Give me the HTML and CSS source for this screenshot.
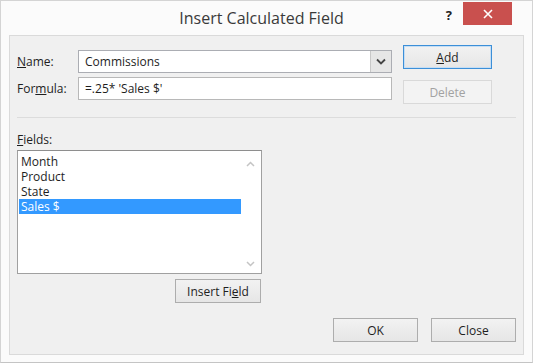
FILE: index.html
```html
<!DOCTYPE html>
<html lang="en">
<head>
  <meta charset="UTF-8" />
  <title>Insert Calculated Field</title>
  <link rel="stylesheet" href="styles.css">
</head>
<body>

  <div class="janela">
    <!-- Barra de título -->
    <div class="titulo-barra">
      <div></div>
      <div class="titulo">Insert Calculated Field</div>
      <div class="controles">
        <span class="ajuda">?</span>
        <span class="fechar">
          <svg width="10" height="10" viewBox="0 0 10 10"><path d="M1 1L9 9M9 1L1 9" stroke="#fff" stroke-width="1.6"/></svg>
        </span>
      </div>
    </div>

    <div class="painel">
      <div class="topo">
        <div class="campos">
          <div class="linha">
            <label class="rotulo"><u>N</u>ame:</label>
            <div class="combo">
              <span class="valor">Commissions</span>
              <span class="seta">
                <svg width="10" height="7" viewBox="0 0 10 7"><path d="M1 1.5L5 5.5L9 1.5" fill="none" stroke="#444" stroke-width="1.8"/></svg>
              </span>
            </div>
          </div>
          <div class="linha">
            <label class="rotulo">For<u>m</u>ula:</label>
            <div class="entrada">=.25* 'Sales $'</div>
          </div>
        </div>
        <div class="acoes">
          <button class="botao foco"><u>A</u>dd</button>
          <button class="botao inativo">Delete</button>
        </div>
      </div>

      <div class="separador"></div>

      <div class="lista-area">
        <div class="rotulo"><u>F</u>ields:</div>
        <div class="lista">
          <div class="itens">
            <div class="item">Month</div>
            <div class="item">Product</div>
            <div class="item">State</div>
            <div class="item selecionado">Sales $</div>
          </div>
          <div class="rolagem">
            <svg width="9" height="6" viewBox="0 0 9 6"><path d="M1 5L4.5 1.5L8 5" fill="none" stroke="#c4c4c4" stroke-width="1.5"/></svg>
            <svg width="9" height="6" viewBox="0 0 9 6"><path d="M1 1L4.5 4.5L8 1" fill="none" stroke="#c4c4c4" stroke-width="1.5"/></svg>
          </div>
        </div>
        <button class="botao inserir">Insert Fi<u>e</u>ld</button>
      </div>

      <div class="rodape">
        <button class="botao">OK</button>
        <button class="botao">Close</button>
      </div>
    </div>
  </div>

</body>
</html>
```

FILE: styles.css
```css
body {
  margin: 0;
  font-family: "Open Sans", "Noto Sans", sans-serif;
  font-size: 12px;
  color: #1e1e1e;
  background: #fff;
}

.janela {
  width: 533px;
  height: 363px;
  box-sizing: border-box;
  background: #fbfbfb;
  border: 1px solid #d4d4d4;
  border-bottom-color: #c4c4c4;
  padding: 0 8px 7px 8px;
  display: flex;
  flex-direction: column;
}

.titulo-barra {
  height: 34px;
  display: grid;
  grid-template-columns: 1fr auto 1fr;
  align-items: start;
}

.titulo {
  font-size: 16px;
  color: #3a3a3a;
  padding-top: 6px;
  padding-right: 10px;
}

.controles {
  display: flex;
  justify-content: flex-end;
  align-items: flex-start;
  margin-right: 12px;
}

.ajuda {
  font-weight: bold;
  font-size: 13px;
  color: #222;
  margin-top: 5px;
  margin-right: 11px;
}

.fechar {
  width: 49px;
  height: 23px;
  margin-top: 1px;
  background: #c9504e;
  display: flex;
  align-items: center;
  justify-content: center;
}

.painel {
  flex: 1;
  background: #f0f0f0;
  border: 1px solid #dadada;
  display: flex;
  flex-direction: column;
  padding: 0 7px 0 7px;
}

.topo {
  display: flex;
  gap: 11px;
  padding-top: 9px;
}

.campos {
  display: flex;
  flex-direction: column;
  gap: 4px;
  padding-top: 5px;
}

.linha {
  display: flex;
  align-items: center;
}

.rotulo {
  width: 61px;
  color: #1e1e1e;
}

.combo,
.entrada {
  width: 314px;
  height: 23px;
  box-sizing: border-box;
  background: #fff;
  border: 1px solid #abadb3;
  display: flex;
  align-items: center;
  padding-left: 6px;
}

.entrada {
  border-color: #b8b8b8;
}

.combo .valor {
  flex: 1;
}

.seta {
  width: 20px;
  height: 21px;
  background: #e6e6e6;
  border-left: 1px solid #c8c8c8;
  display: flex;
  align-items: center;
  justify-content: center;
}

.acoes {
  display: flex;
  flex-direction: column;
  gap: 11px;
}

.botao {
  font-family: inherit;
  font-size: 12px;
  color: #1e1e1e;
  width: 89px;
  height: 24px;
  padding: 0;
  background: linear-gradient(#f2f2f2, #e6e6e6);
  border: 1px solid #adadad;
  border-radius: 0;
}

.foco {
  border-color: #3c8fd8;
  box-shadow: inset 0 0 0 1px #c6def4;
}

.inativo {
  color: #a2a2a2;
  background: #f3f3f3;
  border-color: #d9d9d9;
}

.separador {
  height: 1px;
  background: #dcdcdc;
  margin: 13px 0 0 0;
}

.lista-area {
  width: 245px;
  display: flex;
  flex-direction: column;
  padding-top: 13px;
}

.lista {
  margin-top: 2px;
  height: 124px;
  box-sizing: border-box;
  background: #fff;
  border: 1px solid #a0a0a0;
  border-top-color: #8e8e8e;
  display: flex;
  padding: 1px;
}

.itens {
  flex: 1;
  font-size: 12px;
  line-height: 15px;
  padding-top: 2px;
}

.item {
  padding-left: 2px;
}

.selecionado {
  background: #3399ff;
  color: #fff;
}

.rolagem {
  width: 19px;
  display: flex;
  flex-direction: column;
  justify-content: space-between;
  align-items: center;
  padding: 9px 0 5px 0;
}

.inserir {
  align-self: flex-end;
  width: 86px;
  margin-top: 5px;
  margin-right: 1px;
}

.rodape {
  display: flex;
  justify-content: flex-end;
  gap: 13px;
  margin-top: 15px;
}

.rodape .botao {
  width: 85px;
}
```
